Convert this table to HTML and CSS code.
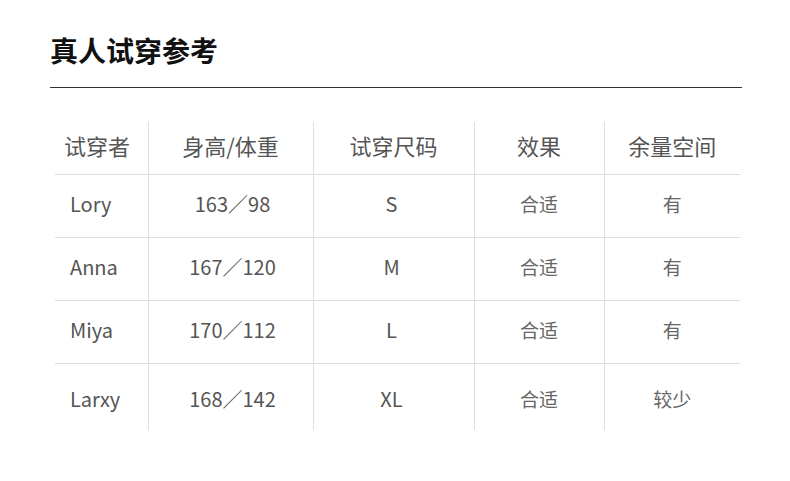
FILE: index.html
```html
<!DOCTYPE html>
<html lang="zh">
<head>
<meta charset="utf-8">
<link rel="stylesheet" href="styles.css">
</head>
<body>
<div class="page">
  <h1 class="title">真人试穿参考</h1>
  <table class="fit">
    <colgroup>
      <col class="c1"><col class="c2"><col class="c3"><col class="c4"><col class="c5">
    </colgroup>
    <thead>
      <tr><th class="first">试穿者</th><th>身高/体重</th><th>试穿尺码</th><th>效果</th><th>余量空间</th></tr>
    </thead>
    <tbody>
      <tr><td class="first">Lory</td><td class="hw">163／98</td><td class="size">S</td><td class="cn">合适</td><td class="cn">有</td></tr>
      <tr><td class="first">Anna</td><td class="hw">167／120</td><td class="size">M</td><td class="cn">合适</td><td class="cn">有</td></tr>
      <tr><td class="first">Miya</td><td class="hw">170／112</td><td class="size">L</td><td class="cn">合适</td><td class="cn">有</td></tr>
      <tr class="last"><td class="first">Larxy</td><td class="hw">168／142</td><td class="size">XL</td><td class="cn">合适</td><td class="cn">较少</td></tr>
    </tbody>
  </table>
</div>
</body>
</html>
```

FILE: styles.css
```css
html, body {
  margin: 0;
  padding: 0;
  background: #ffffff;
}
body {
  font-family: "Noto Sans CJK SC", "Noto Sans", sans-serif;
  color: #555;
}
.page {
  padding: 0 48px 0 50px;
}
.title {
  margin: 0;
  padding-top: 33px;
  padding-bottom: 20px;
  font-size: 28px;
  line-height: 34px;
  font-weight: 700;
  color: #111;
  border-bottom: 1px solid #333;
}
.fit {
  margin-top: 34px;
  margin-left: 5px;
  width: 685px;
  table-layout: fixed;
  border-collapse: collapse;
}
.c1 { width: 93px; }
.c2 { width: 165px; }
.c3 { width: 161px; }
.c4 { width: 130px; }
.c5 { width: 136px; }
.fit th, .fit td {
  padding: 0;
  text-align: center;
  border-left: 1px solid #dedede;
  color: #555;
}
.fit th.first, .fit td.first {
  border-left: none;
  text-align: left;
}
.fit th {
  height: 46px;
  padding-bottom: 6px;
  font-size: 22px;
  line-height: 30px;
  font-weight: 400;
}
.fit th.first { padding-left: 9px; }
.fit td {
  height: 58px;
  padding-bottom: 4px;
  border-top: 1px solid #dedede;
  font-size: 20px;
  line-height: 28px;
}
.fit td.first { padding-left: 15px; }
.fit td.hw { padding-left: 4px; }
.fit td.size { padding-right: 4px; }
.fit td.cn { font-size: 19px; color: #666; }
.fit tr.last td {
  height: 62px;
  padding-top: 4px;
  padding-bottom: 0;
}
```
